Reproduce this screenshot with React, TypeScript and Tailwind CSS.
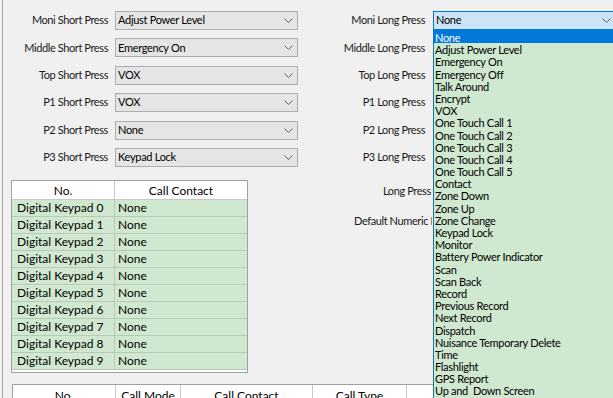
import React from "react";

const shortPress = [
  { label: "Moni Short Press", value: "Adjust Power Level" },
  { label: "Middle Short Press", value: "Emergency On" },
  { label: "Top Short Press", value: "VOX" },
  { label: "P1 Short Press", value: "VOX" },
  { label: "P2 Short Press", value: "None" },
  { label: "P3 Short Press", value: "Keypad Lock" },
];

const longPress = [
  "Moni Long Press",
  "Middle Long Press",
  "Top Long Press",
  "P1 Long Press",
  "P2 Long Press",
  "P3 Long Press",
];

const options = [
  "None",
  "Adjust Power Level",
  "Emergency On",
  "Emergency Off",
  "Talk Around",
  "Encrypt",
  "VOX",
  "One Touch Call 1",
  "One Touch Call 2",
  "One Touch Call 3",
  "One Touch Call 4",
  "One Touch Call 5",
  "Contact",
  "Zone Down",
  "Zone Up",
  "Zone Change",
  "Keypad Lock",
  "Monitor",
  "Battery Power Indicator",
  "Scan",
  "Scan Back",
  "Record",
  "Previous Record",
  "Next Record",
  "Dispatch",
  "Nuisance Temporary Delete",
  "Time",
  "Flashlight",
  "GPS Report",
  "Up and  Down Screen",
];

function Chevron() {
  return (
    <svg width="9" height="5" viewBox="0 0 9 5" className="shrink-0">
      <polyline points="0.5,0.5 4.5,4.5 8.5,0.5" fill="none" stroke="#606060" strokeWidth="1" />
    </svg>
  );
}

function Combo({ value, open }: { value: string; open?: boolean }) {
  return (
    <div
      className={
        open
          ? "flex items-center w-[183px] h-[19px] border border-[#0078d7] bg-[#cce4f7] pl-[2px] pr-[4px]"
          : "flex items-center w-[183px] h-[19px] border border-[#adadad] bg-[#e5e5e5] pl-[2px] pr-[4px]"
      }
    >
      <span className="flex-1 whitespace-pre tracking-[-0.3px]">{value}</span>
      <Chevron />
    </div>
  );
}

export default function App() {
  return (
    <div className="relative w-[613px] h-[398px] overflow-hidden bg-[#f0f0f0] text-[11px] text-black font-['Lato',sans-serif]">
      <div className="ml-[2px] h-full border-l border-[#a5a5a5] pt-[11px]">
        {/* key settings */}
        <div className="flex">
          <div className="flex flex-col gap-[8.4px]">
            {shortPress.map((row) => (
              <div key={row.label} className="flex items-center h-[19px]">
                <span className="w-[105px] text-right text-[#1a1a1a] tracking-[-0.4px]">{row.label}</span>
                <div className="ml-[7px]">
                  <Combo value={row.value} />
                </div>
              </div>
            ))}
          </div>
          <div className="flex flex-col gap-[8.4px]">
            {longPress.map((label, i) => (
              <div key={label} className="flex items-center h-[19px]">
                <span className="ml-[7px] w-[120px] text-right text-[#1a1a1a] tracking-[-0.4px]">{label}</span>
                <div className="ml-[8px]">
                  {i === 0 ? <Combo value="None" open /> : <div className="w-[183px]" />}
                </div>
              </div>
            ))}
          </div>
        </div>

        {/* keypad table + other settings */}
        <div className="flex mt-[13px]">
          <div className="ml-[8px] w-[237px] h-[193px] border border-[#a0a0a0] bg-white text-[12px]">
            <div className="flex h-[19px] border-b border-[#c8c8c8] bg-white">
              <div className="w-[103px] border-r border-[#c8c8c8] text-center leading-[19px]">No.</div>
              <div className="flex-1 text-center leading-[19px]">Call Contact</div>
            </div>
            {Array.from({ length: 10 }).map((_, i) => (
              <div key={i} className="flex h-[17px] border-b border-[#b9c9b9] bg-[#cfe8cf]">
                <div className="w-[103px] border-r border-[#b9c9b9] pl-[5px] leading-[16px]">Digital Keypad {i}</div>
                <div className="flex-1 pl-[3px] leading-[16px]">None</div>
              </div>
            ))}
          </div>
          <div className="flex flex-col">
            <span className="ml-[135px] mt-[3px] w-[49px] overflow-hidden whitespace-nowrap text-[#1a1a1a] tracking-[-0.4px]">Long Press Time</span>
            <span className="ml-[106px] mt-[14px] w-[78px] overflow-hidden whitespace-nowrap text-[#1a1a1a] tracking-[-0.4px]">Default Numeric Keypad</span>
          </div>
        </div>

        {/* one touch call table */}
        <div className="ml-[9px] mt-[11px] flex h-[20px] border border-[#a0a0a0] bg-white text-[12px]">
          <div className="w-[103px] border-r border-[#c8c8c8] text-center leading-[22px]">No.</div>
          <div className="w-[65px] border-r border-[#c8c8c8] text-center leading-[22px]">Call Mode</div>
          <div className="w-[132px] border-r border-[#c8c8c8] text-center leading-[22px]">Call Contact</div>
          <div className="w-[94px] border-r border-[#c8c8c8] text-center leading-[22px]">Call Type</div>
          <div className="flex-1 text-center leading-[22px]">Message</div>
        </div>
      </div>

      {/* open dropdown list */}
      <div className="absolute left-[433px] top-[30px] w-[183px] h-[380px] border border-[#0078d7] bg-[#cfe8cf]">
        {options.map((opt, i) => (
          <div
            key={opt}
            className={
              i === 0
                ? "h-[12.2px] pl-[1px] bg-[#0078d7] text-white"
                : "h-[12.2px] pl-[1px]"
            }
          >
            <span className="relative top-[1px] block leading-[12.2px] whitespace-pre tracking-[-0.3px]">{opt}</span>
          </div>
        ))}
      </div>
    </div>
  );
}
